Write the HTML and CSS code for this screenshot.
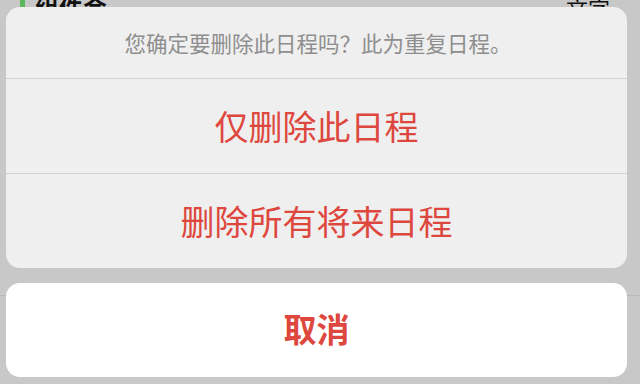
FILE: index.html
```html
<!DOCTYPE html>
<html lang="zh-CN">
<head>
    <meta charset="UTF-8">
    <meta name="viewport" content="width=device-width, initial-scale=1.0">
    <title>删除日程</title>
    <link rel="stylesheet" href="styles.css">
</head>
<body>
    <!-- page underneath the sheet, mostly hidden -->
    <div class="page">
        <div class="page-head">
            <span class="tag"></span>
            <span class="page-title">组件会</span>
            <span class="page-right">文字</span>
        </div>
        <div class="page-line"></div>
    </div>

    <div class="sheet">
        <div class="group">
            <div class="message">您确定要删除此日程吗？此为重复日程。</div>
            <button class="action">仅删除此日程</button>
            <button class="action">删除所有将来日程</button>
        </div>
        <button class="cancel">取消</button>
    </div>
</body>
</html>
```

FILE: styles.css
```css
body {
    margin: 0;
    width: 640px;
    height: 384px;
    overflow: hidden;
    background-color: #c8c8c8;
    font-family: "Noto Sans CJK SC", "Noto Sans", sans-serif;
    position: relative;
}
.page {
    height: 384px;
}
.page-head {
    display: flex;
    align-items: flex-end;
    height: 8px;
    overflow: hidden;
    padding: 0 30px 0 20px;
}
.tag {
    width: 5px;
    height: 8px;
    background-color: #5cb85c;
    margin-right: 10px;
}
.page-title {
    font-size: 24px;
    font-weight: bold;
    color: #111;
    line-height: 14px;
    height: 8px;
}
.page-right {
    margin-left: auto;
    font-size: 22px;
    color: #111;
    line-height: 14px;
    height: 8px;
}
.page-line {
    margin-top: 287px;
    height: 1px;
    background-color: #b9b9b9;
}
/* action sheet lies over the page */
.sheet {
    position: absolute;
    top: 7px;
    left: 6px;
    width: 621px;
    display: flex;
    flex-direction: column;
    gap: 15px;
}
.group {
    background-color: #efefef;
    border-radius: 14px;
    overflow: hidden;
}
.message {
    height: 72px;
    display: flex;
    align-items: center;
    justify-content: center;
    font-size: 21.5px;
    color: #8e8e8e;
    border-bottom: 1px solid #d2d2d2;
    padding-left: 3px;
    box-sizing: border-box;
}
.action, .cancel {
    display: flex;
    align-items: center;
    justify-content: center;
    width: 100%;
    border: none;
    padding: 0 0 2px 0;
    font-family: inherit;
    font-size: 34px;
    color: #de473e;
    background: none;
    box-sizing: border-box;
}
.action {
    height: 94px;
}
.action + .action {
    border-top: 1px solid #d2d2d2;
    height: 95px;
}
.cancel {
    height: 94px;
    padding-bottom: 5px;
    background-color: #fff;
    border-radius: 14px;
    font-weight: bold;
    font-size: 33px;
}
```
